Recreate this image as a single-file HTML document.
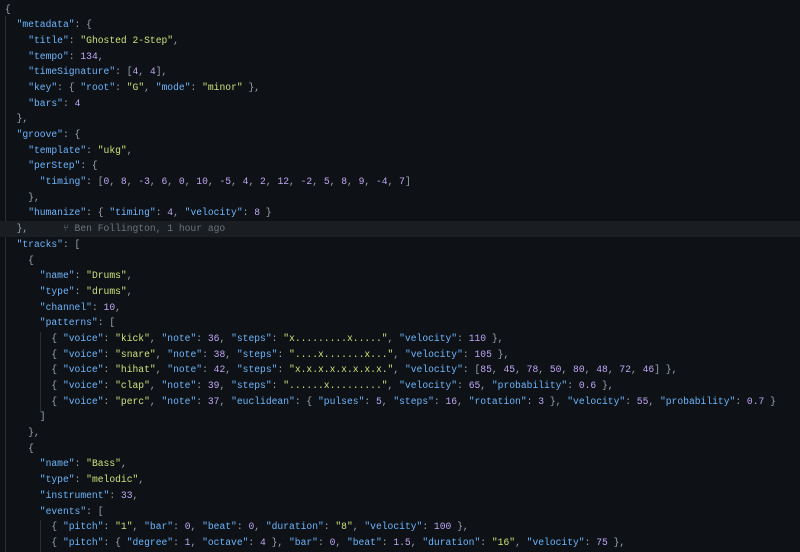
<!DOCTYPE html>
<html><head><meta charset="utf-8"><style>
html,body{margin:0;padding:0;background:#0e1115;width:800px;height:552px;overflow:hidden}
#ed{position:relative;font-family:"Liberation Mono",monospace;font-size:9.67px;color:#9aa4ae;padding-top:1.5px}
.l{height:15.7px;line-height:15.7px;white-space:pre;padding-left:5px;position:relative}
.k{color:#6cb6ff}.s{color:#cfe07a}.n{color:#bfa6f5}
.hl{background:#1a1d22}
.bl{color:#6b737c}
.g{position:absolute;width:1px;background:#2a2f36}
</style></head><body><div id="ed">
<div class="g" style="left:5px;top:16px;height:537px"></div>
<div class="g" style="left:40px;top:332px;height:80px"></div>
<div class="g" style="left:40px;top:520px;height:32px"></div>
<div class="l">{</div>
<div class="l">  <span class="k">"metadata"</span>: {</div>
<div class="l">    <span class="k">"title"</span>: <span class="s">"Ghosted 2-Step"</span>,</div>
<div class="l">    <span class="k">"tempo"</span>: <span class="n">134</span>,</div>
<div class="l">    <span class="k">"timeSignature"</span>: [<span class="n">4</span>, <span class="n">4</span>],</div>
<div class="l">    <span class="k">"key"</span>: { <span class="k">"root"</span>: <span class="s">"G"</span>, <span class="k">"mode"</span>: <span class="s">"minor"</span> },</div>
<div class="l">    <span class="k">"bars"</span>: <span class="n">4</span></div>
<div class="l">  },</div>
<div class="l">  <span class="k">"groove"</span>: {</div>
<div class="l">    <span class="k">"template"</span>: <span class="s">"ukg"</span>,</div>
<div class="l">    <span class="k">"perStep"</span>: {</div>
<div class="l">      <span class="k">"timing"</span>: [<span class="n">0</span>, <span class="n">8</span>, <span class="n">-3</span>, <span class="n">6</span>, <span class="n">0</span>, <span class="n">10</span>, <span class="n">-5</span>, <span class="n">4</span>, <span class="n">2</span>, <span class="n">12</span>, <span class="n">-2</span>, <span class="n">5</span>, <span class="n">8</span>, <span class="n">9</span>, <span class="n">-4</span>, <span class="n">7</span>]</div>
<div class="l">    },</div>
<div class="l">    <span class="k">"humanize"</span>: { <span class="k">"timing"</span>: <span class="n">4</span>, <span class="k">"velocity"</span>: <span class="n">8</span> }</div>
<div class="l hl">  },      <span class="bl">⑂ Ben Follington, 1 hour ago</span></div>
<div class="l">  <span class="k">"tracks"</span>: [</div>
<div class="l">    {</div>
<div class="l">      <span class="k">"name"</span>: <span class="s">"Drums"</span>,</div>
<div class="l">      <span class="k">"type"</span>: <span class="s">"drums"</span>,</div>
<div class="l">      <span class="k">"channel"</span>: <span class="n">10</span>,</div>
<div class="l">      <span class="k">"patterns"</span>: [</div>
<div class="l">        { <span class="k">"voice"</span>: <span class="s">"kick"</span>, <span class="k">"note"</span>: <span class="n">36</span>, <span class="k">"steps"</span>: <span class="s">"x.........x....."</span>, <span class="k">"velocity"</span>: <span class="n">110</span> },</div>
<div class="l">        { <span class="k">"voice"</span>: <span class="s">"snare"</span>, <span class="k">"note"</span>: <span class="n">38</span>, <span class="k">"steps"</span>: <span class="s">"....x.......x..."</span>, <span class="k">"velocity"</span>: <span class="n">105</span> },</div>
<div class="l">        { <span class="k">"voice"</span>: <span class="s">"hihat"</span>, <span class="k">"note"</span>: <span class="n">42</span>, <span class="k">"steps"</span>: <span class="s">"x.x.x.x.x.x.x.x."</span>, <span class="k">"velocity"</span>: [<span class="n">85</span>, <span class="n">45</span>, <span class="n">78</span>, <span class="n">50</span>, <span class="n">80</span>, <span class="n">48</span>, <span class="n">72</span>, <span class="n">46</span>] },</div>
<div class="l">        { <span class="k">"voice"</span>: <span class="s">"clap"</span>, <span class="k">"note"</span>: <span class="n">39</span>, <span class="k">"steps"</span>: <span class="s">"......x........."</span>, <span class="k">"velocity"</span>: <span class="n">65</span>, <span class="k">"probability"</span>: <span class="n">0.6</span> },</div>
<div class="l">        { <span class="k">"voice"</span>: <span class="s">"perc"</span>, <span class="k">"note"</span>: <span class="n">37</span>, <span class="k">"euclidean"</span>: { <span class="k">"pulses"</span>: <span class="n">5</span>, <span class="k">"steps"</span>: <span class="n">16</span>, <span class="k">"rotation"</span>: <span class="n">3</span> }, <span class="k">"velocity"</span>: <span class="n">55</span>, <span class="k">"probability"</span>: <span class="n">0.7</span> }</div>
<div class="l">      ]</div>
<div class="l">    },</div>
<div class="l">    {</div>
<div class="l">      <span class="k">"name"</span>: <span class="s">"Bass"</span>,</div>
<div class="l">      <span class="k">"type"</span>: <span class="s">"melodic"</span>,</div>
<div class="l">      <span class="k">"instrument"</span>: <span class="n">33</span>,</div>
<div class="l">      <span class="k">"events"</span>: [</div>
<div class="l">        { <span class="k">"pitch"</span>: <span class="s">"1"</span>, <span class="k">"bar"</span>: <span class="n">0</span>, <span class="k">"beat"</span>: <span class="n">0</span>, <span class="k">"duration"</span>: <span class="s">"8"</span>, <span class="k">"velocity"</span>: <span class="n">100</span> },</div>
<div class="l">        { <span class="k">"pitch"</span>: { <span class="k">"degree"</span>: <span class="n">1</span>, <span class="k">"octave"</span>: <span class="n">4</span> }, <span class="k">"bar"</span>: <span class="n">0</span>, <span class="k">"beat"</span>: <span class="n">1.5</span>, <span class="k">"duration"</span>: <span class="s">"16"</span>, <span class="k">"velocity"</span>: <span class="n">75</span> },</div>
</div></body></html>
